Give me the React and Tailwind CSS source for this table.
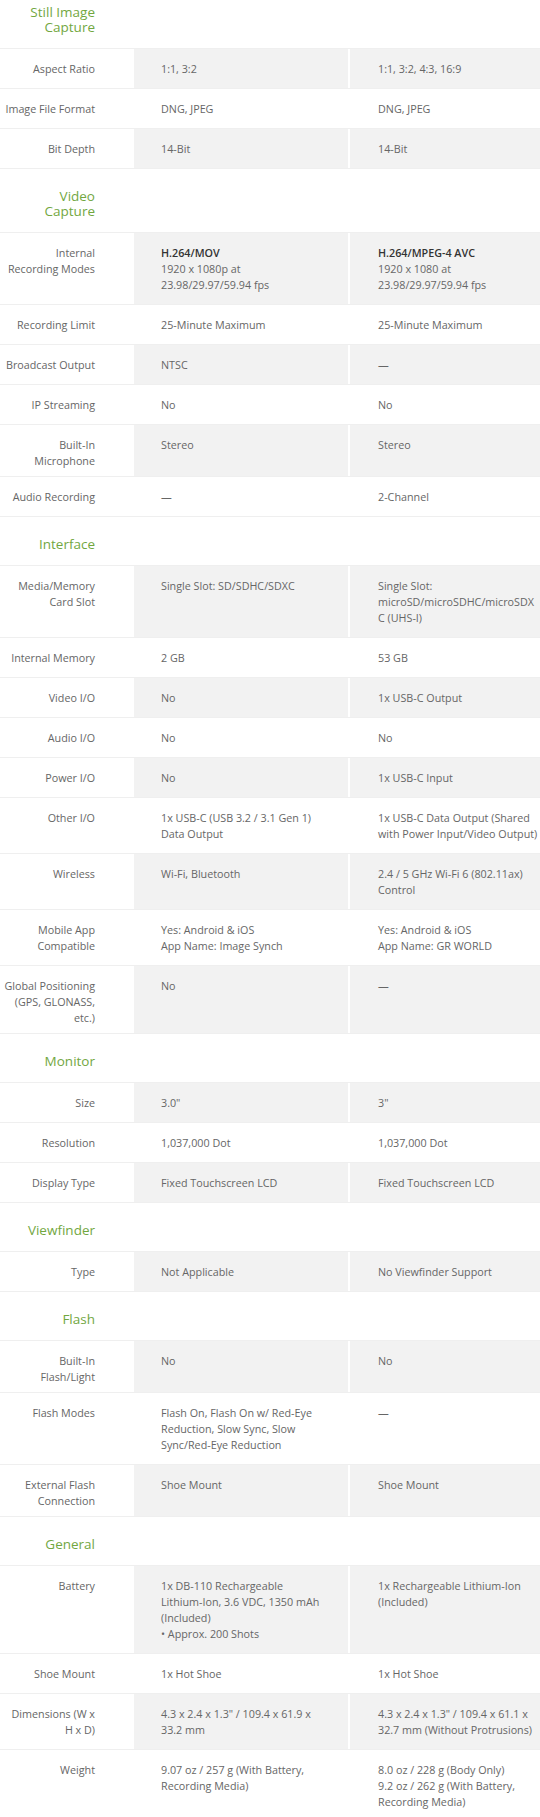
import React from "react";

const specs = [
  {
    title: ["Still Image", "Capture"],
    first: true,
    rows: [
      { label: ["Aspect Ratio"], a: ["1:1, 3:2"], b: ["1:1, 3:2, 4:3, 16:9"] },
      { label: ["Image File Format"], a: ["DNG, JPEG"], b: ["DNG, JPEG"] },
      { label: ["Bit Depth"], a: ["14-Bit"], b: ["14-Bit"] },
    ],
  },
  {
    title: ["Video", "Capture"],
    rows: [
      {
        label: ["Internal", "Recording Modes"],
        a: [{ t: "H.264/MOV", strong: true }, "1920 x 1080p at", "23.98/29.97/59.94 fps"],
        b: [{ t: "H.264/MPEG-4 AVC", strong: true }, "1920 x 1080 at", "23.98/29.97/59.94 fps"],
      },
      { label: ["Recording Limit"], a: ["25-Minute Maximum"], b: ["25-Minute Maximum"] },
      { label: ["Broadcast Output"], a: ["NTSC"], b: ["\u2014"] },
      { label: ["IP Streaming"], a: ["No"], b: ["No"] },
      { label: ["Built-In", "Microphone"], a: ["Stereo"], b: ["Stereo"] },
      { label: ["Audio Recording"], a: ["\u2014"], b: ["2-Channel"] },
    ],
  },
  {
    title: ["Interface"],
    rows: [
      {
        label: ["Media/Memory", "Card Slot"],
        a: ["Single Slot: SD/SDHC/SDXC"],
        b: ["Single Slot:", "microSD/microSDHC/microSDX", "C (UHS-I)"],
      },
      { label: ["Internal Memory"], a: ["2 GB"], b: ["53 GB"] },
      { label: ["Video I/O"], a: ["No"], b: ["1x USB-C Output"] },
      { label: ["Audio I/O"], a: ["No"], b: ["No"] },
      { label: ["Power I/O"], a: ["No"], b: ["1x USB-C Input"] },
      {
        label: ["Other I/O"],
        a: ["1x USB-C (USB 3.2 / 3.1 Gen 1)", "Data Output"],
        b: ["1x USB-C Data Output (Shared", "with Power Input/Video Output)"],
      },
      {
        label: ["Wireless"],
        a: ["Wi-Fi, Bluetooth"],
        b: ["2.4 / 5 GHz Wi-Fi 6 (802.11ax)", "Control"],
      },
      {
        label: ["Mobile App", "Compatible"],
        a: ["Yes: Android & iOS", "App Name: Image Synch"],
        b: ["Yes: Android & iOS", "App Name: GR WORLD"],
      },
      {
        label: ["Global Positioning", "(GPS, GLONASS,", "etc.)"],
        a: ["No"],
        b: ["\u2014"],
      },
    ],
  },
  {
    title: ["Monitor"],
    rows: [
      { label: ["Size"], a: ["3.0\""], b: ["3\""] },
      { label: ["Resolution"], a: ["1,037,000 Dot"], b: ["1,037,000 Dot"] },
      { label: ["Display Type"], a: ["Fixed Touchscreen LCD"], b: ["Fixed Touchscreen LCD"] },
    ],
  },
  {
    title: ["Viewfinder"],
    rows: [{ label: ["Type"], a: ["Not Applicable"], b: ["No Viewfinder Support"] }],
  },
  {
    title: ["Flash"],
    rows: [
      { label: ["Built-In", "Flash/Light"], a: ["No"], b: ["No"] },
      {
        label: ["Flash Modes"],
        a: ["Flash On, Flash On w/ Red-Eye", "Reduction, Slow Sync, Slow", "Sync/Red-Eye Reduction"],
        b: ["\u2014"],
      },
      { label: ["External Flash", "Connection"], a: ["Shoe Mount"], b: ["Shoe Mount"] },
    ],
  },
  {
    title: ["General"],
    rows: [
      {
        label: ["Battery"],
        a: [
          "1x DB-110 Rechargeable",
          "Lithium-Ion, 3.6 VDC, 1350 mAh",
          "(Included)",
          "\u2022 Approx. 200 Shots",
        ],
        b: ["1x Rechargeable Lithium-Ion", "(Included)"],
      },
      { label: ["Shoe Mount"], a: ["1x Hot Shoe"], b: ["1x Hot Shoe"] },
      {
        label: ["Dimensions (W x", "H x D)"],
        a: ["4.3 x 2.4 x 1.3\" / 109.4 x 61.9 x", "33.2 mm"],
        b: ["4.3 x 2.4 x 1.3\" / 109.4 x 61.1 x", "32.7 mm (Without Protrusions)"],
      },
      {
        label: ["Weight"],
        a: ["9.07 oz / 257 g (With Battery,", "Recording Media)"],
        b: ["8.0 oz / 228 g (Body Only)", "9.2 oz / 262 g (With Battery,", "Recording Media)"],
      },
    ],
  },
];

const Lines = ({ lines }) =>
  lines.map((line, i) =>
    typeof line === "string" ? (
      <div key={i} className="whitespace-nowrap">
        {line}
      </div>
    ) : (
      <div key={i} className="whitespace-nowrap font-semibold text-[#333333]">
        {line.t}
      </div>
    )
  );

const SectionHeader = ({ title, first }) => (
  <div
    className={
      first
        ? "border-b border-[#efefef] pt-[5px] pb-[13px]"
        : "border-b border-[#efefef] pt-5 pb-[13px]"
    }
  >
    <div className="w-[134px] pr-[39px] text-right text-[13.5px] leading-[15px] text-[#72a73f]">
      {title.map((t) => (
        <div key={t}>{t}</div>
      ))}
    </div>
  </div>
);

const SpecRow = ({ row, shaded }) => (
  <div className="flex border-b border-[#efefef]">
    <div className="w-[134px] shrink-0 pt-3 pb-[7px] pr-[39px] text-right">
      <Lines lines={row.label} />
    </div>
    <div
      className={
        shaded
          ? "w-[214px] shrink-0 bg-[#f2f2f2] pt-3 pb-[11px] pl-[27px]"
          : "w-[214px] shrink-0 pt-3 pb-[11px] pl-[27px]"
      }
    >
      <Lines lines={row.a} />
    </div>
    <div
      className={
        shaded
          ? "ml-[2px] flex-1 bg-[#f2f2f2] pt-3 pb-[11px] pl-[28px]"
          : "ml-[2px] flex-1 pt-3 pb-[11px] pl-[28px]"
      }
    >
      <Lines lines={row.b} />
    </div>
  </div>
);

export default function App() {
  return (
    <div className="w-[540px] overflow-hidden bg-white font-['Open_Sans',sans-serif] text-[10.75px] leading-4 text-[#666666]">
      {specs.map((section) => (
        <div key={section.title.join(" ")}>
          <SectionHeader title={section.title} first={section.first} />
          {section.rows.map((row, i) => (
            <SpecRow key={row.label.join(" ")} row={row} shaded={i % 2 === 0} />
          ))}
        </div>
      ))}
    </div>
  );
}
